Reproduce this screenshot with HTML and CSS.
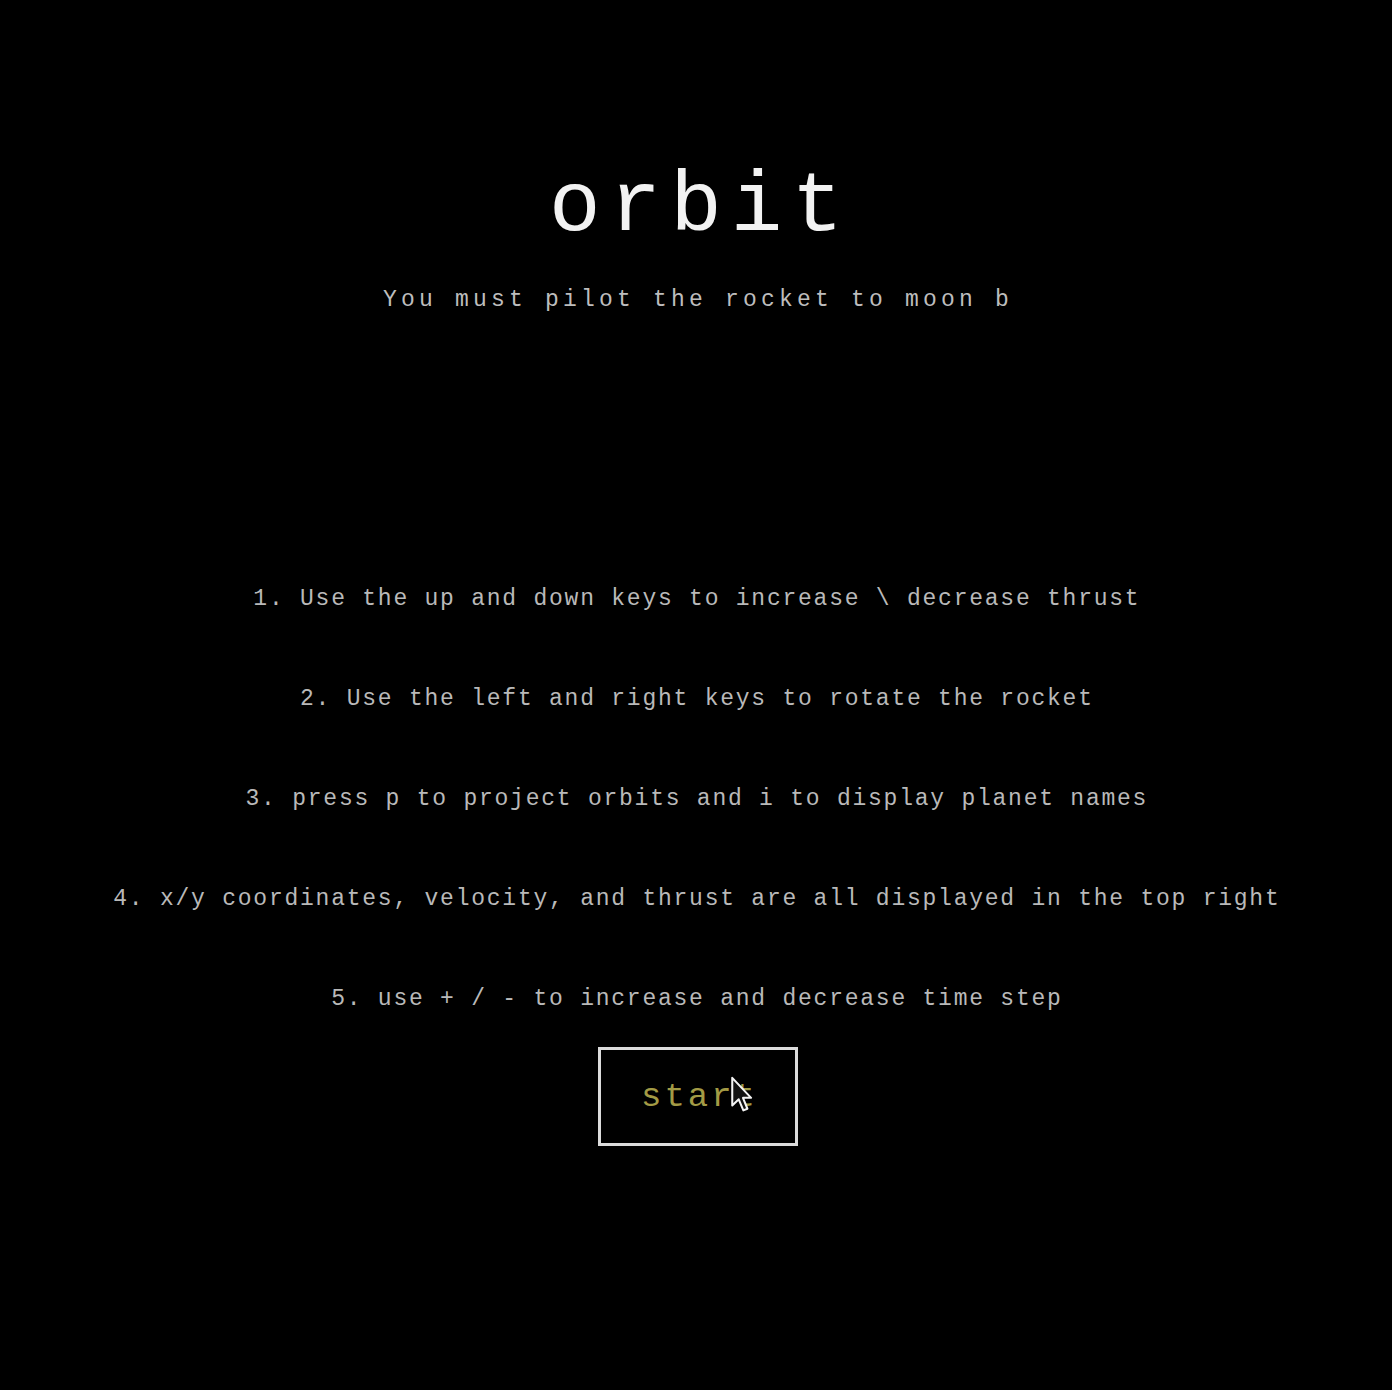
FILE: index.html
```html
<!DOCTYPE html>
<html lang="en">
<head>
<meta charset="utf-8">
<title>orbit</title>
<link rel="stylesheet" href="styles.css">
</head>
<body>
<main class="screen">
  <h1 class="title">orbit</h1>
  <p class="subtitle">You must pilot the rocket to moon b</p>
  <ol class="steps">
    <li class="step">1. Use the up and down keys to increase \ decrease thrust</li>
    <li class="step">2. Use the left and right keys to rotate the rocket</li>
    <li class="step">3. press p to project orbits and i to display planet names</li>
    <li class="step">4. x/y coordinates, velocity, and thrust are all displayed in the top right</li>
    <li class="step">5. use + / - to increase and decrease time step</li>
  </ol>
  <button class="start" type="button">start
    <svg class="cursor" width="23" height="37" viewBox="0 0 12 20" aria-hidden="true">
      <path d="M1 1 L1 16 L4.5 12.6 L7 18.6 L9.2 17.7 L6.8 11.8 L11.2 11.8 Z" fill="#111" stroke="#f4f4f4" stroke-width="1.1" stroke-linejoin="round"/>
    </svg>
  </button>
</main>
</body>
</html>
```

FILE: styles.css
```css
html, body {
  margin: 0;
  padding: 0;
  background: #000;
}

body {
  min-height: 1390px;
  font-family: "Liberation Mono", "DejaVu Sans Mono", monospace;
}

.screen {
  display: flex;
  flex-direction: column;
  align-items: center;
}

.title {
  margin: 163px 0 0;
  font-size: 86px;
  line-height: 88px;
  font-weight: normal;
  color: #f2f2f2;
  letter-spacing: 9px;
  padding-left: 9px;
}

.subtitle {
  margin: 34px 0 0;
  font-size: 23px;
  line-height: 30px;
  color: #bdbdbd;
  letter-spacing: 4.2px;
  padding-left: 4.2px;
}

.steps {
  list-style: none;
  margin: 269px 0 0;
  padding: 0;
  display: flex;
  flex-direction: column;
  align-items: center;
  gap: 70px;
}

.step {
  font-size: 23px;
  line-height: 30px;
  color: #b9b9b9;
  letter-spacing: 1.76px;
  padding-left: 1.76px;
  white-space: pre;
}

.start {
  position: relative;
  margin: 33px 0 0 4px;
  width: 200px;
  height: 99px;
  box-sizing: border-box;
  border: 3px solid #dcdcdc;
  background: #000;
  color: #a39b45;
  font-family: "Liberation Mono", "DejaVu Sans Mono", monospace;
  font-size: 34px;
  letter-spacing: 3px;
  padding: 0 0 0 3px;
  cursor: pointer;
}

.cursor {
  position: absolute;
  left: 129px;
  top: 26px;
}
```
